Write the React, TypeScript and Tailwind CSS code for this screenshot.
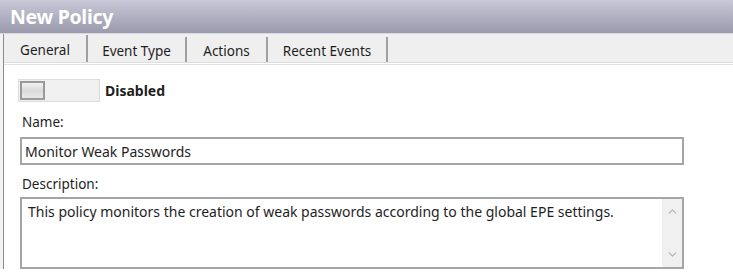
import { ChevronDown, ChevronUp } from "lucide-react";

const font = { fontFamily: '"Noto Sans", "Open Sans", sans-serif' };

const tabs = [
  { label: "General", w: "w-[84px]" },
  { label: "Event Type", w: "w-[99px]" },
  { label: "Actions", w: "w-[81px]" },
  { label: "Recent Events", w: "w-[120px]" },
];

export default function App() {
  return (
    <div className="w-[733px] h-[276px] overflow-hidden bg-white text-[#1e1e1e]" style={font}>
      {/* title bar */}
      <div className="h-[34px] bg-gradient-to-b from-[#c9c8d9] to-[#9b9aac] border-b border-[#d9d9e2] flex items-center pl-[10px]">
        <span className="text-white font-bold text-[19.5px] tracking-[-0.3px]">New Policy</span>
      </div>

      <div className="flex">
        <div className="w-[3px] bg-[#f3f3f3]" />
        <div className="flex-1 border-l border-[#8c8c8c]">
          {/* tabs */}
          <div className="h-[29px] bg-[#efefef] flex items-end border-b border-[#dedede]">
            {tabs.map((t, i) => (
              <div
                key={t.label}
                className={
                  t.w +
                  " flex items-center justify-center border-r-2 border-[#a0a0a0] text-[13.5px] pt-[3px] " +
                  (i === 0 ? "h-[27px]" : "h-[25px]")
                }
              >
                {t.label}
              </div>
            ))}
          </div>
          <div className="h-[2px] border-b border-[#e2e2e2]" />

          {/* body */}
          <div className="pl-[16px] pr-[49px] pt-[14px]">
            <div className="flex items-center gap-[5px] -ml-[2px]">
              <div className="w-[82px] h-[23px] bg-[#f0f0f0] border border-[#dcdcdc] p-[1px]">
                <div className="w-[25px] h-[19px] border-2 border-[#9a9a9a] bg-gradient-to-b from-[#f2f2f2] via-[#dadada] to-[#e8e8e8]" />
              </div>
              <span className="font-bold text-[14px]">Disabled</span>
            </div>

            <div className="mt-[10px] mb-[5px] pl-[2px] text-[13.5px] leading-[20px]">Name:</div>
            <div className="h-[28px] border-2 border-[#a5a5a5] flex items-center pl-[3px] text-[14px]">
              Monitor Weak Passwords
            </div>

            <div className="mt-[9px] mb-[3px] pl-[2px] text-[13.5px] leading-[20px]">Description:</div>
            <div className="h-[72px] border-2 border-[#a5a5a5] flex">
              <div className="flex-1 pl-[6px] pt-[2px] text-[14px]">
                This policy monitors the creation of weak passwords according to the global EPE settings.
              </div>
              <div className="w-[20px] bg-[#f0f0f0] flex flex-col items-center justify-between py-[6px] text-[#b0b0b0]">
                <ChevronUp size={13} strokeWidth={2} />
                <ChevronDown size={13} strokeWidth={2} />
              </div>
            </div>
          </div>
        </div>
      </div>
    </div>
  );
}
